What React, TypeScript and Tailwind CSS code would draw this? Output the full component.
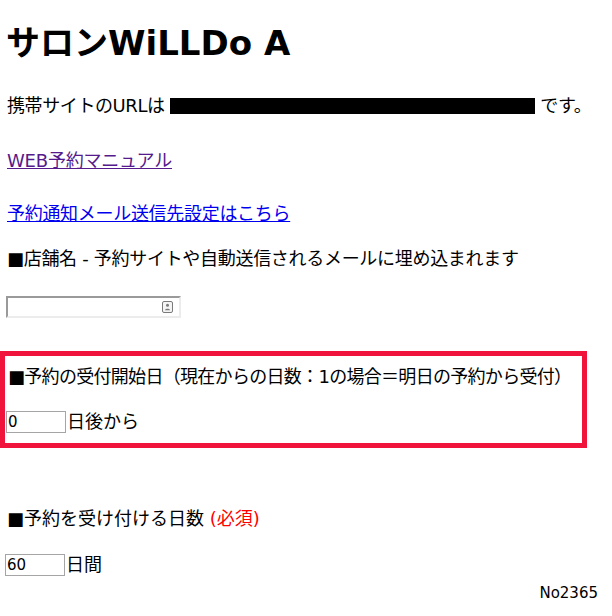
const font = "font-['DejaVu_Sans','Noto_Sans_CJK_JP',sans-serif]"

function NumberBox({ value }: { value: string }) {
  return (
    <input
      type="text"
      defaultValue={value}
      className="h-[22px] w-[60px] border border-[#a5a5a5] bg-white px-[1px] text-[15px] leading-[20px] text-black outline-none"
    />
  )
}

export default function App() {
  return (
    <div className={`${font} min-h-[616px] w-[612px] bg-white text-black`}>
      <h1 className="pl-[6px] pt-[23px] text-[34px] font-bold leading-[40px]">サロンWiLLDo A</h1>

      <p className="mt-[31px] pl-[7px] text-[18px] leading-[24px] tracking-[-0.4px]">
        携帯サイトのURLは{" "}
        <span className="inline-block h-[16px] w-[365px] bg-black align-[-2px]" /> です。
      </p>

      <p className="mt-[31px] pl-[7px] text-[18px] leading-[24px] tracking-[-0.2px]">
        <a href="#" className="text-[#551a8b] underline">
          WEB予約マニュアル
        </a>
      </p>

      <p className="mt-[29px] pl-[7px] text-[18px] leading-[24px] tracking-[-0.3px]">
        <a href="#" className="text-[#0000ee] underline">
          予約通知メール送信先設定はこちら
        </a>
      </p>

      <p className="mt-[21px] pl-[7px] text-[18px] leading-[24px] tracking-[-0.3px]">
        ■店舗名 - 予約サイトや自動送信されるメールに埋め込まれます
      </p>

      <div className="mt-[24px] pl-[6px]">
        <div className="relative h-[22px] w-[175px]">
          <input
            type="text"
            className="h-[22px] w-[175px] border-2 border-b-[#ececec] border-l-[#9a9a9a] border-r-[#ececec] border-t-[#9a9a9a] bg-white outline-none"
          />
          <svg
            className="absolute right-[8px] top-[6px]"
            width="11"
            height="12"
            viewBox="0 0 11 12"
          >
            <rect x="0.5" y="0.5" width="10" height="11" rx="1.5" fill="#f4f4f4" stroke="#7a7a7a" />
            <circle cx="5.5" cy="4.3" r="1.5" fill="#7a7a7a" />
            <path d="M3 9.2 C3 7.2 8 7.2 8 9.2 Z" fill="#7a7a7a" />
          </svg>
        </div>
      </div>

      <div className="mt-[34px] w-[587px] border-[5px] border-[#f0143c] px-[1px] pb-[10px] pt-[9px]">
        <p className="whitespace-nowrap pl-[2px] text-[18px] leading-[24px] tracking-[-0.7px]">
          ■予約の受付開始日（現在からの日数：1の場合＝明日の予約から受付）
        </p>
        <div className="mt-[22px] flex items-center text-[18px] leading-[22px]">
          <NumberBox value="0" />
          <span className="ml-[1px]">日後から</span>
        </div>
      </div>

      <p className="mt-[59px] pl-[7px] text-[18px] leading-[24px]">
        ■予約を受け付ける日数 <span className="text-[#ff0000]">(必須)</span>
      </p>

      <div className="mt-[23px] flex items-center pl-[5px] text-[18px] leading-[22px]">
        <NumberBox value="60" />
        <span className="ml-[1px]">日間</span>
      </div>

      <div className="mt-[7px] pr-[14px] text-right text-[15px] leading-[20px]">No2365</div>
    </div>
  )
}
